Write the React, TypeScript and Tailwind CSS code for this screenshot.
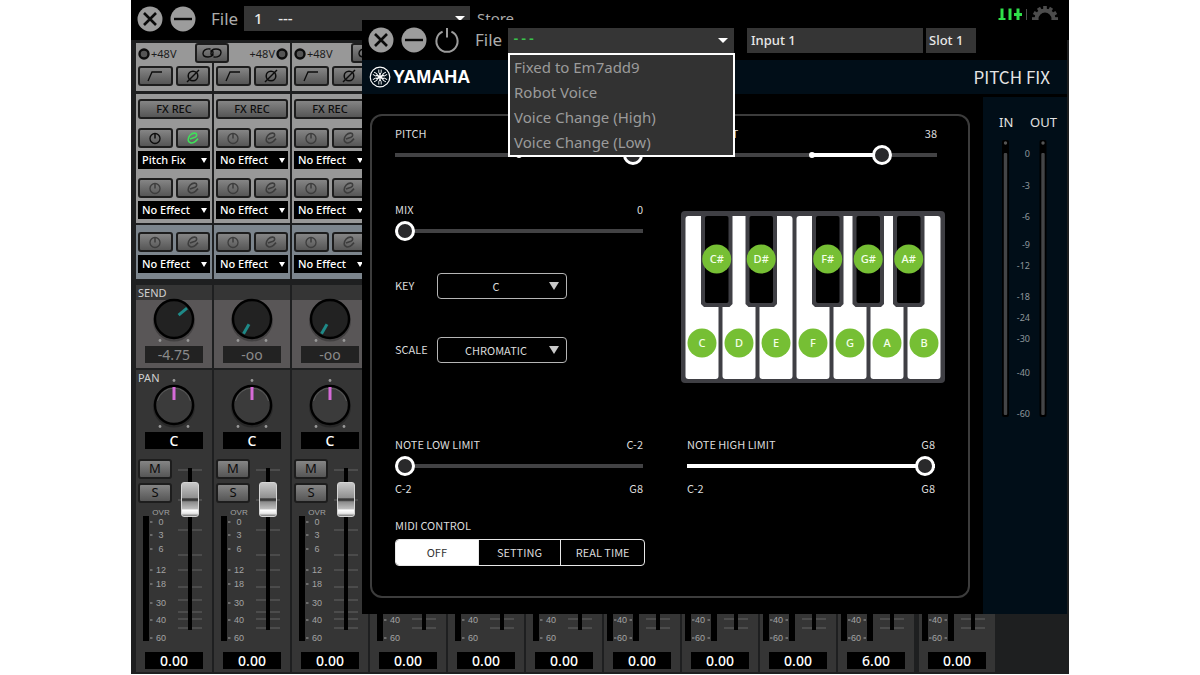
import { useState } from "react";
import { clsx } from "clsx";

type StripData = {
  effect?: string;
  send?: string;
  sendAngle?: number;
  level: string;
  stereo?: boolean;
};

const FULL_STRIPS: StripData[] = [
  { effect: "Pitch Fix", send: "-4.75", sendAngle: 50, level: "0.00" },
  { effect: "No Effect", send: "-oo", sendAngle: 210, level: "0.00" },
  { effect: "No Effect", send: "-oo", sendAngle: 210, level: "0.00" },
];

const SHORT_STRIPS: StripData[] = [
  { level: "0.00" },
  { level: "0.00" },
  { level: "0.00" },
  { level: "0.00", stereo: true },
  { level: "0.00", stereo: true },
  { level: "0.00", stereo: true },
  { level: "6.00", stereo: true },
  { level: "0.00", stereo: true },
];

const METER_MARKS = [
  { label: "0", y: 15 },
  { label: "3", y: 28 },
  { label: "6", y: 42 },
  { label: "12", y: 63 },
  { label: "18", y: 77 },
  { label: "30", y: 96 },
  { label: "40", y: 113 },
  { label: "60", y: 131 },
];

const FADER_TICKS = [11, 41, 71, 96, 111, 128, 141, 153, 160, 169];

const IO_MARKS = [
  { label: "0", y: 17 },
  { label: "-3", y: 49 },
  { label: "-6", y: 80 },
  { label: "-9", y: 108 },
  { label: "-12", y: 129 },
  { label: "-18", y: 160 },
  { label: "-24", y: 181 },
  { label: "-30", y: 202 },
  { label: "-40", y: 236 },
  { label: "-60", y: 277 },
];

const PRESETS = [
  "Fixed to Em7add9",
  "Robot Voice",
  "Voice Change (High)",
  "Voice Change (Low)",
];

const WHITE_KEYS = ["C", "D", "E", "F", "G", "A", "B"];

const BLACK_KEYS = [
  { label: "C#", x: 20 },
  { label: "D#", x: 64.5 },
  { label: "F#", x: 131 },
  { label: "G#", x: 171.5 },
  { label: "A#", x: 212 },
];

function CloseIcon() {
  return (
    <svg viewBox="0 0 26 26" className="size-[26px]">
      <circle cx="13" cy="13" r="12.5" fill="#9c9c9c" />
      <path d="M7 7l12 12M19 7L7 19" stroke="#0a0a0a" strokeWidth="2.6" />
    </svg>
  );
}

function MinimizeIcon() {
  return (
    <svg viewBox="0 0 26 26" className="size-[26px]">
      <circle cx="13" cy="13" r="12.5" fill="#9c9c9c" />
      <path d="M4 13h18" stroke="#0a0a0a" strokeWidth="2.4" />
    </svg>
  );
}

function PowerIcon() {
  return (
    <svg viewBox="0 0 26 26" className="size-[26px]" fill="none">
      <path
        d="M8.6 4.6A10.6 10.6 0 1 0 17.4 4.6M13 1v9.5"
        stroke="#9c9c9c"
        strokeWidth="2"
      />
    </svg>
  );
}

function WindowButtons({ withPower = false }: { withPower?: boolean }) {
  return (
    <div className="flex shrink-0 gap-[7px]">
      <button type="button" aria-label="Close">
        <CloseIcon />
      </button>
      <button type="button" aria-label="Minimize">
        <MinimizeIcon />
      </button>
      {withPower && (
        <button type="button" aria-label="Power">
          <PowerIcon />
        </button>
      )}
    </div>
  );
}

function DownArrow({ className }: { className: string }) {
  return (
    <svg
      viewBox="0 0 10 6"
      preserveAspectRatio="none"
      className={clsx("pointer-events-none absolute", className)}
    >
      <path d="M0 0h10L5 6z" fill="currentColor" />
    </svg>
  );
}

function GearIcon() {
  return (
    <svg viewBox="-14 -14 28 28" className="size-7 text-[#4c4c4c]">
      <circle r="8.5" fill="none" stroke="currentColor" strokeWidth="4" />
      {[0, 30, 60, 90, 120, 150, 180, 210, 240, 270, 300, 330].map((angle) => (
        <rect
          key={angle}
          x="-1.8"
          y="-13"
          width="3.6"
          height="4"
          fill="currentColor"
          transform={`rotate(${angle})`}
        />
      ))}
    </svg>
  );
}

const padButton =
  "flex h-5 items-center justify-center rounded-[3px] border-2 border-[#1d1d1d] bg-linear-to-b from-[#858585] to-[#565656]";

function EffectSlot({
  value,
  active = false,
}: {
  value: string;
  active?: boolean;
}) {
  return (
    <div className="flex flex-col gap-[3px]">
      <div className="grid grid-cols-2 gap-[3px]">
        <button
          type="button"
          aria-label="Effect on"
          className={clsx(padButton, active ? "text-[#0c0c0c]" : "text-[#3d3d3d]")}
        >
          <svg viewBox="0 0 14 14" className="size-3.5" fill="none">
            <circle cx="7" cy="7.5" r="5" stroke="currentColor" strokeWidth="1.3" />
            <path d="M7 2.5v5" stroke="currentColor" strokeWidth="1.5" />
          </svg>
        </button>
        <button
          type="button"
          aria-label="Edit effect"
          className={clsx(padButton, active ? "text-[#3fe05a]" : "text-[#3d3d3d]")}
        >
          <svg viewBox="0 0 14 14" className="size-3.5" fill="none">
            <path
              d="M4 8L9 6.2C11.2 5.2 11.4 2.4 8.8 2.1C5.4 1.8 2.2 5.4 2.2 8.8C2.4 12.4 6.6 12.8 9.4 10.4L12 7.6"
              stroke="currentColor"
              strokeWidth="1.6"
              strokeLinejoin="round"
            />
          </svg>
        </button>
      </div>
      <div className="relative h-[18px] text-white">
        <select
          aria-label="Insert effect"
          defaultValue={value}
          className="block h-[18px] w-full appearance-none bg-black pl-1 text-[11px] leading-[18px] font-medium outline-none"
        >
          <option>{value}</option>
        </select>
        <DownArrow className="top-[7px] right-[3px] h-[5px] w-1.5" />
      </div>
    </div>
  );
}

function Knob({ angle, kind }: { angle: number; kind: "send" | "pan" }) {
  const isPan = kind === "pan";
  const cy = isPan ? 27 : 21;
  return (
    <svg
      viewBox={isPan ? "0 0 76 52" : "0 0 76 48"}
      className={clsx("relative w-full", isPan ? "-mt-2" : "-mt-0.5")}
    >
      <circle cx="38" cy={cy + 1.5} r="21" fill="#000" opacity="0.25" />
      <circle
        cx="38"
        cy={cy}
        r="19"
        fill={isPan ? "#3b3b3b" : "#222"}
        stroke="#000"
        strokeWidth="2.4"
      />
      {isPan && (
        <path
          d={`M21.5 ${cy - 4}A17 17 0 0 1 54.5 ${cy - 4}`}
          fill="none"
          stroke="#5a5a5a"
        />
      )}
      <path
        d={isPan ? `M38 ${cy - 18}v13` : `M38 ${cy - 17}v11`}
        stroke={isPan ? "#d66bd8" : "#1f8a88"}
        strokeWidth="3"
        transform={`rotate(${angle} 38 ${cy})`}
      />
      {isPan && <circle cx="38" cy="2.5" r="1.4" fill="#999" />}
      <circle cx="24" cy={cy + 21.5} r="1.4" fill="#999" />
      <circle cx="52" cy={cy + 21.5} r="1.4" fill="#999" />
    </svg>
  );
}

function Meter({ short = false, stereo = false }: { short?: boolean; stereo?: boolean }) {
  const top = short ? 105 : 0;
  const textX = stereo ? 18 : 25;
  return (
    <svg
      viewBox={`0 ${top} 42 ${136 - top}`}
      className="w-[42px] shrink-0 overflow-visible"
      fontFamily="Liberation Sans, sans-serif"
      fontSize="9"
      fill="#a3a3a3"
      textAnchor="middle"
    >
      <rect x={stereo ? 3 : 7} y="9" width="6" height="125" fill="#000" />
      {stereo && <rect x="29" y="9" width="6" height="125" fill="#000" />}
      {!short && (
        <text x="25" y="8" fontSize="8">
          OVR
        </text>
      )}
      {METER_MARKS.filter((mark) => mark.y > top).map((mark) => (
        <g key={mark.label}>
          <path
            d={`M${stereo ? 10 : 14} ${mark.y}h2.5`}
            stroke="#a3a3a3"
            strokeWidth="1"
          />
          {stereo && (
            <path d={`M25.5 ${mark.y}h2.5`} stroke="#a3a3a3" strokeWidth="1" />
          )}
          <text x={textX} y={mark.y + 3}>
            {mark.label}
          </text>
        </g>
      ))}
    </svg>
  );
}

function FaderTrack({ short = false }: { short?: boolean }) {
  const top = short ? 153 : 0;
  return (
    <svg viewBox={`0 ${top} 26 ${184 - top}`} className="w-[26px] shrink-0">
      {FADER_TICKS.filter((y) => y >= top).map((y) => (
        <path key={y} d={`M1 ${y}h24`} stroke="#5c5c5c" strokeWidth="1.2" />
      ))}
      <rect x="11" y="9" width="4" height="162" fill="#000" />
    </svg>
  );
}

function LevelBox({ value, dim = false }: { value: string; dim?: boolean }) {
  return (
    <div
      className={clsx(
        "mx-[9px] flex h-[17px] items-center justify-center text-[14px] leading-[17px]",
        dim ? "bg-[#222] text-[#8a8a8a]" : "bg-black font-medium text-white",
      )}
    >
      {value}
    </div>
  );
}

function LinkButton() {
  return (
    <button
      type="button"
      aria-label="Stereo link"
      className={clsx(padButton, "absolute top-0 left-[59px] z-10 w-[34px] text-[#0c0c0c]")}
    >
      <svg
        viewBox="0 0 20 10"
        className="h-2.5 w-5"
        fill="none"
        stroke="currentColor"
        strokeWidth="1.4"
        strokeLinecap="round"
      >
        <path d="M8 1C4 0.5 1 2.5 1 5.5C1 8 3.500 9 6 9C9.500 9 11 7 11 4.500C11 3 10 2.500 9 3" />
        <path d="M12 9C16 9.500 19 7.500 19 4.500C19 2 16.500 1 14 1C10.500 1 9 3 9 5.500C9 7 10 7.500 11 7" />
      </svg>
    </button>
  );
}

function ChannelStrip({ strip, index }: { strip: StripData; index: number }) {
  const effect = strip.effect ?? "";
  return (
    <div className="w-[76px] shrink-0">
      <div className="relative flex flex-col gap-1 bg-[#989898] px-[2px] pt-[3px] pb-[5px]">
        <div
          className={clsx(
            "flex h-4 items-center gap-px text-[11px] text-[#1c1c1c]",
            index % 2 === 1 && "flex-row-reverse",
          )}
        >
          <svg viewBox="0 0 12 12" className="size-3 shrink-0">
            <circle cx="6" cy="6" r="4.5" fill="#555" stroke="#0c0c0c" strokeWidth="2.4" />
          </svg>
          <span>+48V</span>
        </div>
        <div className="grid grid-cols-2 gap-[3px] text-[#0c0c0c]">
          <button type="button" aria-label="High-pass filter" className={padButton}>
            <svg viewBox="0 0 16 12" className="h-3 w-4" fill="none">
              <path d="M1 11L5 2h10" stroke="currentColor" strokeWidth="1.3" />
            </svg>
          </button>
          <button type="button" aria-label="Phase" className={padButton}>
            <svg viewBox="0 0 16 14" className="h-3.5 w-4" fill="none">
              <circle cx="8" cy="7" r="4.8" stroke="currentColor" strokeWidth="1.5" />
              <path d="M2 13L14 1" stroke="currentColor" strokeWidth="1.5" />
            </svg>
          </button>
        </div>
        {index % 2 === 0 && <LinkButton />}
      </div>

      <div className="mt-[3px] flex flex-col gap-[9px] bg-[#989898] px-[2px] pt-[5px] pb-[4px]">
        <button
          type="button"
          className={clsx(padButton, "text-[11px] font-medium text-[#0c0c0c]")}
        >
          FX REC
        </button>
        <EffectSlot value={effect} active={index === 0} />
        <EffectSlot value="No Effect" />
      </div>

      <div className="mt-[2px] bg-[#7c858d] px-[2px] pt-[7px] pb-[6px]">
        <EffectSlot value="No Effect" />
      </div>

      <div className="mt-[6px] bg-[#595657] pb-[5px]">
        <div className="h-[15px] bg-[#353535] pl-[2px] text-[11px] leading-[15px] text-[#d0d0d0]">
          {index === 0 && "SEND"}
        </div>
        <Knob angle={strip.sendAngle ?? 0} kind="send" />
        <LevelBox value={strip.send ?? ""} dim />
      </div>

      <div className="mt-[2px] bg-[#353535] pb-[3px]">
        <div className="h-4 pl-[2px] text-[11px] leading-4 text-[#d0d0d0]">
          {index === 0 && "PAN"}
        </div>
        <Knob angle={0} kind="pan" />
        <div className="mt-0.5">
          <LevelBox value="C" />
        </div>
        <div className="mt-2.5 flex">
          <div className="flex w-[42px] flex-col">
            <div className="mb-1 ml-[2px] flex w-[34px] flex-col gap-1 text-[13px] text-[#0c0c0c]">
              <button type="button" className={padButton}>
                M
              </button>
              <button type="button" className={padButton}>
                S
              </button>
            </div>
            <Meter />
          </div>
          <div className="relative -ml-px">
            <FaderTrack />
            <input
              type="range"
              aria-label="Level"
              defaultValue={89}
              className="absolute top-[9px] left-[4px] h-[162px] w-[18px] appearance-none bg-transparent [direction:rtl] [writing-mode:vertical-lr] [&::-webkit-slider-thumb]:h-[35px] [&::-webkit-slider-thumb]:w-[18px] [&::-webkit-slider-thumb]:appearance-none [&::-webkit-slider-thumb]:rounded-[3px] [&::-webkit-slider-thumb]:border [&::-webkit-slider-thumb]:border-[#d5d5d5] [&::-webkit-slider-thumb]:bg-[linear-gradient(#c8c8c8,#8f8f8f_45%,#333_48%,#444_53%,#8c8c8c_57%,#bdbdbd_78%,#fff_82%,#e8e8e8_92%,#777)]"
            />
          </div>
        </div>
        <div className="mt-[9px]">
          <LevelBox value={strip.level} />
        </div>
      </div>
    </div>
  );
}

function ShortStrip({ strip, last }: { strip: StripData; last: boolean }) {
  return (
    <div
      className={clsx(
        "flex w-[76px] shrink-0 flex-col justify-end bg-[#353535] pb-[3px]",
        last && "ml-[3px]",
      )}
    >
      <div className="flex">
        <Meter short stereo={strip.stereo} />
        <div className="-ml-px">
          <FaderTrack short />
        </div>
      </div>
      <div className="mt-[9px]">
        <LevelBox value={strip.level} />
      </div>
    </div>
  );
}

function ParamSlider({
  label,
  value,
  low,
  high,
  min = 0,
  max = 127,
  initial,
  origin = 0,
}: {
  label: string;
  value?: string;
  low?: string;
  high?: string;
  min?: number;
  max?: number;
  initial: number;
  origin?: number;
}) {
  const [current, setCurrent] = useState(initial);
  const percent = ((current - min) / (max - min)) * 100;
  const left = Math.min(percent, origin);
  const width = Math.abs(percent - origin);

  return (
    <div>
      <label className="flex flex-col gap-1">
        <span className="flex h-4 justify-between">
          <span>{label}</span>
          <span>{value}</span>
        </span>
        <span className="relative block h-5">
          <span className="absolute inset-x-0 top-2 h-1 bg-[#424244]" />
          <span
            className="absolute top-2 h-1 bg-white"
            style={{ left: `${left}%`, width: `${width}%` }}
          />
          {origin > 0 && (
            <span
              className="absolute top-[7px] -ml-[3px] size-1.5 rounded-full bg-white"
              style={{ left: `${origin}%` }}
            />
          )}
          <input
            type="range"
            min={min}
            max={max}
            value={current}
            onChange={(event) => setCurrent(Number(event.target.value))}
            className="absolute inset-0 h-5 w-full appearance-none bg-transparent [&::-webkit-slider-thumb]:size-5 [&::-webkit-slider-thumb]:appearance-none [&::-webkit-slider-thumb]:rounded-full [&::-webkit-slider-thumb]:border-3 [&::-webkit-slider-thumb]:border-white [&::-webkit-slider-thumb]:bg-[#29292b]"
          />
        </span>
      </label>
      {low && (
        <div className="mt-1 flex h-4 justify-between">
          <span>{low}</span>
          <span>{high}</span>
        </div>
      )}
    </div>
  );
}

function ParamSelect({ label, value }: { label: string; value: string }) {
  return (
    <label className="flex h-[26px] leading-6">
      <span className="w-[42px]">{label}</span>
      <span className="relative w-[130px]">
        <select
          defaultValue={value}
          className="block h-[26px] w-full appearance-none rounded-[4px] border border-[#b5b5b5] bg-black pr-3 outline-none [text-align-last:center]"
        >
          <option>{value}</option>
        </select>
        <DownArrow className="top-[9px] right-2 h-2 w-2.5 text-[#c9c9c9]" />
      </span>
    </label>
  );
}

function Piano() {
  return (
    <svg
      viewBox="0 0 264 172"
      className="w-full"
      fontFamily="Noto Sans, sans-serif"
      fontSize="11"
      fontWeight="500"
      textAnchor="middle"
    >
      <rect width="264" height="172" rx="4" fill="#3f3f44" />
      {WHITE_KEYS.map((note, i) => (
        <g key={note}>
          <rect x={4.5 + i * 37} y="5" width="33" height="163" rx="3" fill="#fff" />
          <circle cx={21 + i * 37} cy="132" r="14.5" fill="#76bf34" />
          <text x={21 + i * 37} y="136" fill="#f4ffe9">
            {note}
          </text>
        </g>
      ))}
      {BLACK_KEYS.map((key) => (
        <g key={key.label}>
          <path d={`M${key.x} 3h31.5v90l-3 3h-25.5l-3-3z`} fill="#3f3f44" />
          <rect x={key.x + 4} y="5" width="23.5" height="87" rx="2" fill="#000" />
          <circle cx={key.x + 15.7} cy="48" r="14.5" fill="#76bf34" />
          <text x={key.x + 15.7} y="52" fill="#f4ffe9">
            {key.label}
          </text>
        </g>
      ))}
    </svg>
  );
}

function MidiControl() {
  const [mode, setMode] = useState("OFF");
  return (
    <div>
      <p className="h-4">MIDI CONTROL</p>
      <div className="mt-1.5 grid h-[27px] w-[250px] grid-cols-3 divide-x divide-[#e8e8e8] overflow-hidden rounded-[4px] border border-[#e8e8e8]">
        {["OFF", "SETTING", "REAL TIME"].map((name) => (
          <button
            key={name}
            type="button"
            onClick={() => setMode(name)}
            className={clsx("pb-0.5", mode === name && "bg-white text-[#333]")}
          >
            {name}
          </button>
        ))}
      </div>
    </div>
  );
}

function IoMeter() {
  return (
    <div className="mt-[3px] w-[84px] shrink-0 bg-[#010e18] pt-4 text-[13px] text-[#e2e2e2]">
      <div className="flex h-[18px] leading-[18px]">
        <span className="ml-[16px] w-[31px]">IN</span>
        <span>OUT</span>
      </div>
      <svg
        viewBox="0 0 84 284"
        className="mt-[5px] w-full"
        fontSize="9"
        fill="#8f979c"
        textAnchor="end"
      >
        {[22.5, 60].map((x) => (
          <g key={x}>
            <rect x={x - 3.5} y="4" width="7" height="277" rx="2" fill="#000" />
            <circle cx={x} cy="7" r="1.7" fill="#555" />
            <rect x={x - 1.7} y="17" width="3.4" height="262" rx="1" fill="#444547" />
          </g>
        ))}
        {IO_MARKS.map((mark) => (
          <text key={mark.label} x="47" y={mark.y + 4}>
            {mark.label}
          </text>
        ))}
      </svg>
    </div>
  );
}

function YamahaLogo() {
  return (
    <div className="flex items-center gap-[2px] text-white">
      <svg viewBox="-11 -11 22 22" className="size-[22px]" fill="none" stroke="currentColor">
        <circle r="9.8" strokeWidth="1.2" />
        {[0, 60, 120, 180, 240, 300].map((angle) => (
          <g key={angle} transform={`rotate(${angle})`}>
            <path d="M0 0V-4" strokeWidth="1.5" />
            <path d="M-1.2 -7.5V-4.5Q-1.2 -3.5 0 -3.5Q1.2 -3.5 1.2 -4.5V-7.5" strokeWidth="0.9" />
          </g>
        ))}
      </svg>
      <span className="font-['Liberation_Sans_Narrow','Liberation_Sans',sans-serif] text-[18px] leading-6 font-bold">
        YAMAHA
      </span>
    </div>
  );
}

function PluginWindow() {
  return (
    <section className="absolute top-5 right-[2px] left-[231px] z-20 bg-black">
      <div className="flex h-10 items-center pl-[6px]">
        <WindowButtons withPower />
        <label htmlFor="preset" className="ml-[15px] w-[33px] text-[17px] text-[#ababab]">
          File
        </label>
        <div className="relative h-[25px] w-[226px]">
          <select
            id="preset"
            className="block h-[25px] w-full appearance-none bg-[#353535] pl-1 font-['Liberation_Mono',monospace] text-[13px] font-bold text-[#39c24a] outline-none"
          >
            <option>---</option>
          </select>
          <DownArrow className="top-2.5 right-[6px] h-[5px] w-2.5 text-white" />
          <ul
            role="listbox"
            aria-label="Presets"
            className="absolute top-full left-0 z-10 w-[227px] border-2 border-white bg-[#323232] text-[15px] leading-[25px] text-[#9b9b9b]"
          >
            {PRESETS.map((preset) => (
              <li key={preset} role="option" aria-selected={false} className="pl-1">
                {preset}
              </li>
            ))}
          </ul>
        </div>
        <div className="ml-[13px] flex h-[25px] gap-[3px] text-[13px] leading-[25px] font-medium text-[#e8e8e8]">
          <span className="w-[176px] bg-[#353535] pl-1">Input 1</span>
          <span className="w-[50px] bg-[#353535] pl-[3px]">Slot 1</span>
        </div>
      </div>

      <div className="flex h-[34px] items-center justify-between bg-[#010e18] pr-[17px] pl-[7px]">
        <YamahaLogo />
        <h1 className="font-['Noto_Sans_CJK_JP',sans-serif] text-[17px] leading-6 text-[#e4e4e4]">
          PITCH FIX
        </h1>
      </div>

      <div className="flex">
        <div className="mt-5 mr-[13px] mb-4 ml-2 flex-1 rounded-xl border-2 border-[#3c3c3c] px-[23px] pt-[9px] pb-[30px] font-['Noto_Sans_CJK_JP',sans-serif] text-[11px] leading-4 text-[#dcdcdc]">
          <div className="grid grid-cols-[248fr_264fr] gap-x-[38px]">
            <div>
              <ParamSlider label="PITCH" initial={127} origin={50} />
              <div className="mt-9">
                <ParamSlider label="MIX" value="0" initial={0} />
              </div>
              <div className="mt-8 flex flex-col gap-[38px]">
                <ParamSelect label="KEY" value="C" />
                <ParamSelect label="SCALE" value="CHROMATIC" />
              </div>
            </div>
            <div>
              <div className="pr-2 pl-[6px]">
                <ParamSlider
                  label="FORMANT"
                  value="38"
                  min={-62}
                  max={62}
                  initial={38}
                  origin={50}
                />
              </div>
              <div className="mt-[46px]">
                <Piano />
              </div>
            </div>
          </div>
          <div className="mt-[53px] grid grid-cols-[248fr_264fr] gap-x-[38px]">
            <ParamSlider
              label="NOTE LOW LIMIT"
              value="C-2"
              low="C-2"
              high="G8"
              initial={0}
            />
            <div className="pr-2.5 pl-[6px]">
              <ParamSlider
                label="NOTE HIGH LIMIT"
                value="G8"
                low="C-2"
                high="G8"
                initial={127}
              />
            </div>
          </div>
          <div className="mt-[21px]">
            <MidiControl />
          </div>
        </div>
        <IoMeter />
      </div>
    </section>
  );
}

export default function App() {
  return (
    <div className="min-h-screen bg-white font-['Noto_Sans',sans-serif]">
      <main className="relative mx-auto max-w-[938px] overflow-hidden bg-[#1e1f20] pb-[2px]">
        <header className="flex h-10 items-center bg-black pr-[10px] pb-[3px] pl-[6px]">
          <WindowButtons />
          <label htmlFor="scene" className="ml-[15px] w-[33px] text-[17px] text-[#ababab]">
            File
          </label>
          <div className="relative h-[25px] w-[226px]">
            <select
              id="scene"
              className="block h-[25px] w-full appearance-none bg-[#353535] pl-2.5 text-[15px] font-medium text-[#e8e8e8] outline-none"
            >
              <option>{"1\u00a0\u00a0\u00a0\u00a0---"}</option>
            </select>
            <DownArrow className="top-2.5 right-[5px] h-[5px] w-2.5 text-white" />
          </div>
          <button type="button" className="ml-[7px] text-[15px] text-[#ababab]">
            Store
          </button>
          <div className="ml-auto flex items-center gap-1">
            <button type="button" aria-label="Mixer view" className="text-[#2fe04a]">
              <svg viewBox="0 0 24 24" className="size-6" fill="none" stroke="currentColor" strokeWidth="3">
                <path d="M4 1.5V14M0.5 12.5H7.5M12 1.5V14M20 1.5V14M16 7.5H24" />
              </svg>
            </button>
            <span className="mb-1 h-4 w-px bg-[#4c4c4c]" />
            <button type="button" aria-label="Settings">
              <GearIcon />
            </button>
          </div>
        </header>

        <div className="flex gap-[2px] pt-[3px] pl-[5px]">
          {FULL_STRIPS.map((strip, i) => (
            <ChannelStrip key={i} strip={strip} index={i} />
          ))}
          {SHORT_STRIPS.map((strip, i) => (
            <ShortStrip key={i} strip={strip} last={i === SHORT_STRIPS.length - 1} />
          ))}
        </div>

        <PluginWindow />
      </main>
    </div>
  );
}
